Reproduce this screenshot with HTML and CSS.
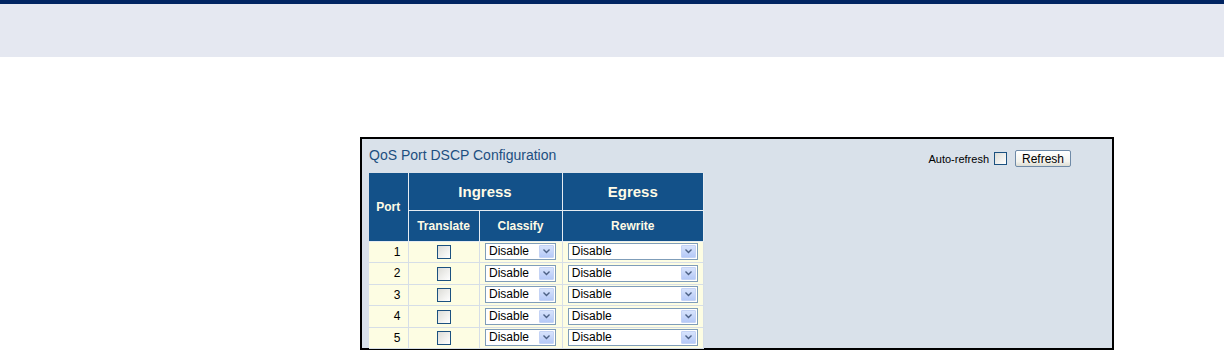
FILE: index.html
```html
<!DOCTYPE html>
<html lang="en">
<head>
	<meta charset="utf-8" />
	<title>QoS Port DSCP Configuration</title>
	<link rel="stylesheet" href="styles.css">
</head>
<body>
<div class="topbar"></div>
<div class="band"></div>

<div class="shot">
	<div class="shot-head">
		<h1>QoS Port DSCP Configuration</h1>
		<div class="refresh">
			<label>Auto-refresh <input type="checkbox" class="chk"></label>
			<button class="btn">Refresh</button>
		</div>
	</div>

	<table class="grid">
		<thead>
			<tr class="h1">
				<th rowspan="2" class="c-port">Port</th>
				<th colspan="2" class="big">Ingress</th>
				<th class="big">Egress</th>
			</tr>
			<tr class="h2">
				<th class="c-tr">Translate</th>
				<th class="c-cl">Classify</th>
				<th class="c-rw">Rewrite</th>
			</tr>
		</thead>
		<tbody>
			<tr>
				<td class="num">1</td>
				<td class="mid"><input type="checkbox" class="chk"></td>
				<td class="mid"><span class="sel short"><select><option>Disable</option></select><span class="arrow"><svg width="7" height="5" viewBox="0 0 7 5"><path d="M0.5 0.5 L3.5 3.5 L6.5 0.5" fill="none" stroke="#4d6185" stroke-width="1.4"/></svg></span></span></td>
				<td class="mid"><span class="sel long"><select><option>Disable</option></select><span class="arrow"><svg width="7" height="5" viewBox="0 0 7 5"><path d="M0.5 0.5 L3.5 3.5 L6.5 0.5" fill="none" stroke="#4d6185" stroke-width="1.4"/></svg></span></span></td>
			</tr>
			<tr>
				<td class="num">2</td>
				<td class="mid"><input type="checkbox" class="chk"></td>
				<td class="mid"><span class="sel short"><select><option>Disable</option></select><span class="arrow"><svg width="7" height="5" viewBox="0 0 7 5"><path d="M0.5 0.5 L3.5 3.5 L6.5 0.5" fill="none" stroke="#4d6185" stroke-width="1.4"/></svg></span></span></td>
				<td class="mid"><span class="sel long"><select><option>Disable</option></select><span class="arrow"><svg width="7" height="5" viewBox="0 0 7 5"><path d="M0.5 0.5 L3.5 3.5 L6.5 0.5" fill="none" stroke="#4d6185" stroke-width="1.4"/></svg></span></span></td>
			</tr>
			<tr>
				<td class="num">3</td>
				<td class="mid"><input type="checkbox" class="chk"></td>
				<td class="mid"><span class="sel short"><select><option>Disable</option></select><span class="arrow"><svg width="7" height="5" viewBox="0 0 7 5"><path d="M0.5 0.5 L3.5 3.5 L6.5 0.5" fill="none" stroke="#4d6185" stroke-width="1.4"/></svg></span></span></td>
				<td class="mid"><span class="sel long"><select><option>Disable</option></select><span class="arrow"><svg width="7" height="5" viewBox="0 0 7 5"><path d="M0.5 0.5 L3.5 3.5 L6.5 0.5" fill="none" stroke="#4d6185" stroke-width="1.4"/></svg></span></span></td>
			</tr>
			<tr>
				<td class="num">4</td>
				<td class="mid"><input type="checkbox" class="chk"></td>
				<td class="mid"><span class="sel short"><select><option>Disable</option></select><span class="arrow"><svg width="7" height="5" viewBox="0 0 7 5"><path d="M0.5 0.5 L3.5 3.5 L6.5 0.5" fill="none" stroke="#4d6185" stroke-width="1.4"/></svg></span></span></td>
				<td class="mid"><span class="sel long"><select><option>Disable</option></select><span class="arrow"><svg width="7" height="5" viewBox="0 0 7 5"><path d="M0.5 0.5 L3.5 3.5 L6.5 0.5" fill="none" stroke="#4d6185" stroke-width="1.4"/></svg></span></span></td>
			</tr>
			<tr>
				<td class="num">5</td>
				<td class="mid"><input type="checkbox" class="chk"></td>
				<td class="mid"><span class="sel short"><select><option>Disable</option></select><span class="arrow"><svg width="7" height="5" viewBox="0 0 7 5"><path d="M0.5 0.5 L3.5 3.5 L6.5 0.5" fill="none" stroke="#4d6185" stroke-width="1.4"/></svg></span></span></td>
				<td class="mid"><span class="sel long"><select><option>Disable</option></select><span class="arrow"><svg width="7" height="5" viewBox="0 0 7 5"><path d="M0.5 0.5 L3.5 3.5 L6.5 0.5" fill="none" stroke="#4d6185" stroke-width="1.4"/></svg></span></span></td>
			</tr>
		</tbody>
	</table>
</div>

</body>
</html>
```

FILE: styles.css
```css
*{
	font-family: "Liberation Sans", Arial, sans-serif;
	box-sizing: border-box;
}

body{
	margin: 0;
	background: #fff;
}

.topbar{
	height: 4px;
	background-color: #002462;
}

.band{
	height: 53px;
	background-color: #e5e8f1;
}

.shot{
	margin: 80px 0 0 360px;
	width: 754px;
	height: 213px;
	border: 2px solid #000;
	background-color: #d9e1ea;
	padding: 0 0 0 7px;
}

.shot-head{
	display: flex;
	justify-content: space-between;
	align-items: flex-start;
	height: 34px;
	padding-right: 41px;
}

h1{
	margin: 8px 0 0 0;
	font-size: 14px;
	font-weight: normal;
	color: #1d4f80;
}

.refresh{
	display: flex;
	align-items: center;
	gap: 8px;
	margin-top: 11px;
	font-size: 11px;
	color: #000;
}

.refresh label{
	display: flex;
	align-items: center;
	gap: 5px;
}

.btn{
	width: 56px;
	height: 17px;
	padding: 0;
	font-size: 12px;
	border: 1px solid #6f8aa7;
	border-radius: 2px;
	background: linear-gradient(#fff, #f3f3ee 70%, #dcdcd4);
	color: #000;
}

.chk{
	-webkit-appearance: none;
	appearance: none;
	width: 14px;
	height: 14px;
	margin: 0;
	border: 1px solid #1c5180;
	background: linear-gradient(135deg, #dcdcd7, #fff);
	vertical-align: middle;
}

.refresh .chk{
	width: 13px;
	height: 13px;
}

.grid{
	border-collapse: collapse;
	width: 335px;
}

.grid th{
	background-color: #135189;
	color: #fffbe6;
	font-weight: bold;
	font-size: 12px;
	border: 1px solid #e6ecf2;
	padding: 0;
}

.grid th.big{
	font-size: 15px;
}

.grid tr:first-child th{
	border-top: none;
}

.grid th.c-port{
	border-left: none;
	width: 39px;
}

.grid .h1 th{
	height: 37px;
}

.grid .h2 th{
	height: 31px;
}

.grid td{
	background-color: #fdfde3;
	border: 1px solid #d6dee7;
	height: 21.5px;
	padding: 0;
	font-size: 12px;
}

.grid td:first-child{
	border-left: none;
}

.grid td.num{
	text-align: right;
	padding-right: 7px;
	color: #000;
}

.grid td.mid{
	text-align: center;
}

.c-tr{
	width: 71px;
}

.c-cl{
	width: 83px;
}

.sel{
	display: inline-flex;
	align-items: center;
	height: 17px;
	border: 1px solid #7f9db9;
	background: #fff;
	padding: 1px;
	vertical-align: middle;
}

.sel.short{
	width: 71px;
}

.sel.long{
	width: 130px;
}

.sel select{
	-webkit-appearance: none;
	appearance: none;
	flex: 1;
	min-width: 0;
	border: none;
	background: transparent;
	font-size: 12px;
	padding: 0 0 0 2px;
	color: #000;
	height: 13px;
	line-height: 13px;
}

.arrow{
	display: flex;
	align-items: center;
	justify-content: center;
	width: 15px;
	height: 13px;
	background: linear-gradient(#d7e3fc, #b5c9f7);
	border: 1px solid #c4d3f5;
	border-radius: 1px;
}
```
